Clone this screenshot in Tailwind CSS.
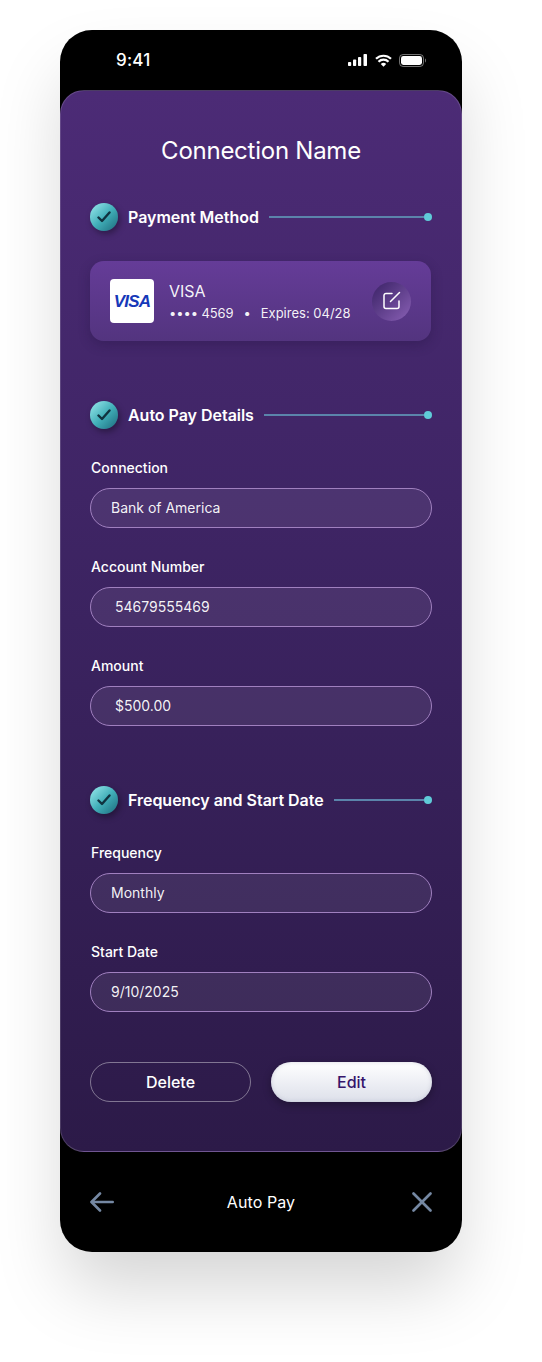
<!DOCTYPE html>
<html>
<head>
	<title>Auto Pay</title>
	<script src="https://cdn.jsdelivr.net/npm/@tailwindcss/browser@4"></script>
</head>
<body class="bg-white font-['Inter',sans-serif] text-white antialiased">
	<div class="w-[542px] h-[1362px] overflow-hidden pt-[30px] pl-[60px]">
		<div class="w-[402px] h-[1222px] bg-black rounded-[32px] shadow-[0_40px_70px_-5px_rgba(0,0,0,0.17)] flex flex-col">

			<!-- status bar -->
			<div class="h-[60px] flex items-center justify-between pl-[56px] pr-[36px]">
				<span class="text-[17px] leading-[22px] font-medium tracking-[0.2px]">9:41</span>
				<div class="flex items-center">
					<svg width="19" height="12" viewBox="0 0 19 12" fill="#fff">
						<rect x="0" y="8" width="3.2" height="4" rx="0.8"/>
						<rect x="5" y="5.500" width="3.2" height="6.500" rx="0.8"/>
						<rect x="10" y="3" width="3.2" height="9" rx="0.8"/>
						<rect x="15.500" y="0" width="3.5" height="12" rx="0.8"/>
					</svg>
					<svg class="ml-[8px]" width="17" height="13" viewBox="0 0 17 13" fill="none" stroke="#fff" stroke-width="2.2">
						<path d="M1 4.800a10.800 10.800 0 0 1 15 0"/>
						<path d="M3.500 7.800a7 7 0 0 1 10 0"/>
						<path d="M8.500 12.800 5.800 10a3.800 3.800 0 0 1 5.400 0z" fill="#fff" stroke="none"/>
					</svg>
					<svg class="ml-[7px]" width="27" height="13" viewBox="0 0 27 13" fill="none">
						<rect x="0.500" y="0.500" width="24" height="12" rx="3.600" stroke="#fff" stroke-opacity="0.45"/>
						<rect x="2" y="2" width="21" height="9" rx="2.400" fill="#fff"/>
						<path d="M26 4.500c.6.300 1 .9 1 2s-.4 1.700-1 2z" fill="#fff" fill-opacity="0.45"/>
					</svg>
				</div>
			</div>

			<!-- main panel -->
			<div class="h-[1062px] rounded-[24px] border border-white/15 border-b-white/20 bg-linear-to-b from-[#4c2b76] via-[#3b2360] to-[#2c1a48] px-[29px] pt-[44px]">
				<h1 class="text-[24px] leading-[32px] tracking-[-0.25px] text-center mb-[36px]">Connection Name</h1>

				<div class="flex items-center h-[28px] mb-[30px]">
					<span class="w-[28px] h-[28px] rounded-full bg-linear-to-br from-[#9aecef] via-[#42b0ba] to-[#1c6c7c] shadow-[2px_3px_6px_rgba(0,0,0,0.35)] flex items-center justify-center shrink-0">
						<svg width="14" height="12" viewBox="0 0 14 12" fill="none" stroke="#10323f" stroke-width="2.400" stroke-linecap="round" stroke-linejoin="round"><path d="M1.500 6.500 5 10l7.500-8.500"/></svg>
					</span>
					<span class="ml-[10px] text-[16px] leading-[20px] font-semibold tracking-[-0.03px] whitespace-nowrap">Payment Method</span>
					<span class="flex-1 h-[2px] bg-[#5b84ab] ml-[10px]"></span>
					<span class="w-[8px] h-[8px] rounded-full bg-[#5fcbd8] shrink-0"></span>
				</div>

				<div class="h-[80px] w-[341px] rounded-[14px] bg-linear-to-b from-[#653c98] to-[#53347f] shadow-[0_4px_12px_rgba(30,15,60,0.3)] flex items-center pl-[20px] pr-[20px] mb-[60px]">
					<div class="w-[44px] h-[44px] bg-white rounded-[4px] flex items-center justify-center shrink-0">
						<span class="mt-[1px] font-['Liberation_Sans',sans-serif] italic font-bold text-[17px] leading-none tracking-[-0.8px] text-[#1638b8]">VISA</span>
					</div>
					<div class="ml-[15px] flex-1">
						<p class="text-[16px] leading-[20px] text-white/95">VISA</p>
						<p class="text-[13px] leading-[16px] mt-[4px] text-white/95 whitespace-nowrap flex items-center">
							<span class="tracking-[-0.1px]">•••• 4569</span>
							<span class="ml-[10px]">•</span>
							<span class="ml-[10px]">Expires: 04/28</span>
						</p>
					</div>
					<div class="w-[39px] h-[39px] rounded-full bg-linear-to-br from-[#3b2266] to-[#8a60b5] flex items-center justify-center shrink-0">
						<svg class="-mt-[1px] overflow-visible" width="18" height="18" viewBox="0 0 18 18" fill="none" stroke="#fff" stroke-width="1.500" stroke-linecap="round" stroke-linejoin="round">
							<path d="M9 1.500H3a2 2 0 0 0-2 2v11a2 2 0 0 0 2 2h11a2 2 0 0 0 2-2V9"/>
							<path d="M7.500 9.500 16.500 .5"/>
						</svg>
					</div>
				</div>

				<div class="flex items-center h-[28px] mb-[29px]">
					<span class="w-[28px] h-[28px] rounded-full bg-linear-to-br from-[#9aecef] via-[#42b0ba] to-[#1c6c7c] shadow-[2px_3px_6px_rgba(0,0,0,0.35)] flex items-center justify-center shrink-0">
						<svg width="14" height="12" viewBox="0 0 14 12" fill="none" stroke="#10323f" stroke-width="2.400" stroke-linecap="round" stroke-linejoin="round"><path d="M1.500 6.500 5 10l7.500-8.500"/></svg>
					</span>
					<span class="ml-[10px] text-[16px] leading-[20px] font-semibold tracking-[-0.03px] whitespace-nowrap">Auto Pay Details</span>
					<span class="flex-1 h-[2px] bg-[#5b84ab] ml-[10px]"></span>
					<span class="w-[8px] h-[8px] rounded-full bg-[#5fcbd8] shrink-0"></span>
				</div>

				<div class="flex flex-col gap-[29px] mb-[60px]">
					<div>
						<p class="text-[14px] leading-[20px] font-medium pl-[1px] mb-[10px]">Connection</p>
						<div class="h-[40px] rounded-full border border-[#a080bf] bg-white/[0.07] flex items-center pl-[20px] pb-[2px] text-[14px] text-white/95">Bank of America</div>
					</div>
					<div>
						<p class="text-[14px] leading-[20px] font-medium pl-[1px] mb-[10px]">Account Number</p>
						<div class="h-[40px] rounded-full border border-[#a080bf] bg-white/[0.07] flex items-center pl-[24px] pb-[2px] text-[14px] text-white/95">54679555469</div>
					</div>
					<div>
						<p class="text-[14px] leading-[20px] font-medium pl-[1px] mb-[10px]">Amount</p>
						<div class="h-[40px] rounded-full border border-[#a080bf] bg-white/[0.07] flex items-center pl-[24px] pb-[2px] text-[14px] text-white/95">$500.00</div>
					</div>
				</div>

				<div class="flex items-center h-[28px] mb-[29px]">
					<span class="w-[28px] h-[28px] rounded-full bg-linear-to-br from-[#9aecef] via-[#42b0ba] to-[#1c6c7c] shadow-[2px_3px_6px_rgba(0,0,0,0.35)] flex items-center justify-center shrink-0">
						<svg width="14" height="12" viewBox="0 0 14 12" fill="none" stroke="#10323f" stroke-width="2.400" stroke-linecap="round" stroke-linejoin="round"><path d="M1.500 6.500 5 10l7.500-8.500"/></svg>
					</span>
					<span class="ml-[10px] text-[16px] leading-[20px] font-semibold tracking-[-0.03px] whitespace-nowrap">Frequency and Start Date</span>
					<span class="flex-1 h-[2px] bg-[#5b84ab] ml-[10px]"></span>
					<span class="w-[8px] h-[8px] rounded-full bg-[#5fcbd8] shrink-0"></span>
				</div>

				<div class="flex flex-col gap-[29px] mb-[50px]">
					<div>
						<p class="text-[14px] leading-[20px] font-medium pl-[1px] mb-[10px]">Frequency</p>
						<div class="h-[40px] rounded-full border border-[#a080bf] bg-white/[0.07] flex items-center pl-[20px] pb-[2px] text-[14px] text-white/95">Monthly</div>
					</div>
					<div>
						<p class="text-[14px] leading-[20px] font-medium pl-[1px] mb-[10px]">Start Date</p>
						<div class="h-[40px] rounded-full border border-[#a080bf] bg-white/[0.07] flex items-center pl-[20px] pb-[2px] text-[14px] text-white/95">9/10/2025</div>
					</div>
				</div>

				<div class="flex gap-[20px]">
					<button class="w-[161px] h-[40px] rounded-full border border-white/40 text-[16px] font-medium">Delete</button>
					<button class="w-[161px] h-[40px] rounded-full bg-linear-to-b from-white to-[#dde0ea] shadow-[0_3px_8px_rgba(0,0,0,0.3),inset_0_0_4px_rgba(150,155,180,0.4)] text-[16px] font-medium text-[#35156b]">Edit</button>
				</div>
			</div>

			<!-- bottom nav -->
			<div class="flex-1 flex items-center justify-between px-[30px]">
				<span class="w-[24px] flex">
					<svg width="24" height="20" viewBox="0 0 24 20" fill="none" stroke="#7588a3" stroke-width="2.600" stroke-linecap="round" stroke-linejoin="round">
						<path d="M22.700 10H2"/>
						<path d="M10 1.500 1.500 10l8.500 8.500"/>
					</svg>
				</span>
				<span class="text-[16px] leading-[20px] tracking-[0.1px]">Auto Pay</span>
				<span class="w-[24px] flex justify-end">
					<svg width="20" height="20" viewBox="0 0 20 20" fill="none" stroke="#7588a3" stroke-width="2.600" stroke-linecap="round">
						<path d="M1.500 1.500l17 17"/>
						<path d="M18.500 1.500l-17 17"/>
					</svg>
				</span>
			</div>
		</div>
	</div>
</body>
</html>
